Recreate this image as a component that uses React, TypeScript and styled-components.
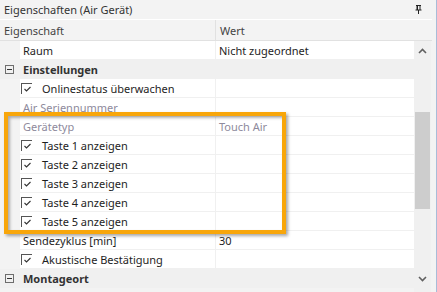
import React from "react";
import styled, { createGlobalStyle } from "styled-components";

const GlobalStyle = createGlobalStyle`
  html, body { margin: 0; padding: 0; background: #ffffff; }
  * { box-sizing: border-box; }
`;

const FONT = `"Noto Sans", "Open Sans", sans-serif`;

const Panel = styled.div`
  position: relative;
  width: 437px;
  height: 292px;
  background: #f3f3f3;
  font-family: ${FONT};
  font-size: 11px;
  color: #1e1e1e;
  overflow: hidden;
  display: flex;
  flex-direction: column;
  padding-right: 4px;
  border-right: 1px solid #a8bcd8;
`;

const TitleBar = styled.div`
  height: 19px;
  flex: none;
  display: flex;
  align-items: center;
  justify-content: space-between;
  padding: 0 10px 0 4px;
  color: #333;
`;

const Header = styled.div`
  height: 22px;
  flex: none;
  display: grid;
  grid-template-columns: 216px 1fr;
  border-top: 1px solid #ffffff;
  border-bottom: 1px solid #e1e1e1;
  color: #444;
`;

const HeaderCell = styled.div<{ $last?: boolean }>`
  display: flex;
  align-items: center;
  padding-left: 4px;
  border-right: ${(p) => (p.$last ? "none" : "1px solid #e1e1e1")};
`;

const Body = styled.div`
  flex: 1;
  display: flex;
  min-height: 0;
`;

const Grid = styled.div`
  width: 414px;
  display: flex;
  flex-direction: column;
`;

const Row = styled.div<{ $category?: boolean }>`
  height: 19px;
  flex: none;
  display: grid;
  grid-template-columns: 20px 196px 1fr;
  background: ${(p) => (p.$category ? "#f0f0f0" : "#ffffff")};
`;

const Gutter = styled.div`
  background: #f3f3f3;
`;

const NameCell = styled.div<{ $muted?: boolean }>`
  display: flex;
  align-items: center;
  gap: 10px;
  padding-left: 3px;
  border-right: 1px solid #f0f0f0;
  border-bottom: 1px solid #f0f0f0;
  color: ${(p) => (p.$muted ? "#8e8a9c" : "#1e1e1e")};
  white-space: nowrap;
`;

const CheckName = styled(NameCell)`
  padding-left: 1px;
`;

const ValueCell = styled.div<{ $muted?: boolean }>`
  display: flex;
  align-items: center;
  padding-left: 3px;
  border-bottom: 1px solid #f0f0f0;
  color: ${(p) => (p.$muted ? "#8e8a9c" : "#1e1e1e")};
  white-space: nowrap;
`;

const CategoryCell = styled.div`
  grid-column: 1 / -1;
  display: flex;
  align-items: center;
  font-weight: 700;
  color: #333;
  padding-left: 5px;
  gap: 9px;
`;

const MinusBox = styled.span`
  width: 9px;
  height: 9px;
  border: 1px solid #6d6d6d;
  position: relative;
  flex: none;
  &::after {
    content: "";
    position: absolute;
    left: 1px;
    right: 1px;
    top: 3px;
    height: 1px;
    background: #333;
  }
`;

const Check = styled.span`
  width: 11px;
  height: 11px;
  flex: none;
  border-top: 1px solid #555;
  border-left: 1px solid #555;
  display: flex;
  align-items: center;
  justify-content: center;
`;

const ScrollBar = styled.div`
  width: 17px;
  flex: none;
  background: #f0f0f0;
  display: flex;
  flex-direction: column;
  align-items: center;
  padding-bottom: 4px;
`;

const ArrowBtn = styled.div`
  height: 19px;
  width: 17px;
  flex: none;
  display: flex;
  align-items: center;
  justify-content: center;
`;

const Track = styled.div`
  flex: 1;
  width: 17px;
  padding: 52px 1px 0 1px;
`;

const Thumb = styled.div`
  width: 15px;
  height: 97px;
  background: #cdcdcd;
`;

const Highlight = styled.div`
  position: absolute;
  left: 4px;
  top: 112px;
  width: 282px;
  height: 122px;
  border: 4px solid #f8a60a;
  box-shadow: 2px 2px 3px rgba(0, 0, 0, 0.35), inset 2px 2px 3px rgba(0, 0, 0, 0.3);
  pointer-events: none;
`;

const CheckMark = () => (
  <svg width="9" height="8" viewBox="0 0 9 8">
    <path d="M1.5 4 L3.5 6 L7.5 2" fill="none" stroke="#333" strokeWidth="1.1" />
  </svg>
);

const Pin = () => (
  <svg width="7" height="9" viewBox="0 0 7 9">
    <path d="M1 0.5 H6 M2 0.5 V5 M5 0.5 V5 M0.5 5 H6.5 M3.5 5 V9" fill="none" stroke="#222" strokeWidth="1" />
    <rect x="2" y="1" width="1" height="4" fill="#222" />
  </svg>
);

const Chevron = ({ up }: { up?: boolean }) => (
  <svg width="9" height="6" viewBox="0 0 9 6">
    <path d={up ? "M1 5 L4.5 1.5 L8 5" : "M1 1 L4.5 4.5 L8 1"} fill="none" stroke="#606060" strokeWidth="1.6" />
  </svg>
);

type Item =
  | { kind: "cat"; name: string }
  | { kind: "prop"; name: string; value?: string; muted?: boolean }
  | { kind: "check"; name: string };

const items: Item[] = [
  { kind: "prop", name: "Raum", value: "Nicht zugeordnet" },
  { kind: "cat", name: "Einstellungen" },
  { kind: "check", name: "Onlinestatus überwachen" },
  { kind: "prop", name: "Air Seriennummer", muted: true },
  { kind: "prop", name: "Gerätetyp", value: "Touch Air", muted: true },
  { kind: "check", name: "Taste 1 anzeigen" },
  { kind: "check", name: "Taste 2 anzeigen" },
  { kind: "check", name: "Taste 3 anzeigen" },
  { kind: "check", name: "Taste 4 anzeigen" },
  { kind: "check", name: "Taste 5 anzeigen" },
  { kind: "prop", name: "Sendezyklus [min]", value: "30" },
  { kind: "check", name: "Akustische Bestätigung" },
  { kind: "cat", name: "Montageort" },
];

export default function App() {
  return (
    <>
      <GlobalStyle />
      <Panel>
        <TitleBar>
          <span>Eigenschaften (Air Gerät)</span>
          <Pin />
        </TitleBar>
        <Header>
          <HeaderCell>Eigenschaft</HeaderCell>
          <HeaderCell $last>Wert</HeaderCell>
        </Header>
        <Body>
          <Grid>
            {items.map((it, i) => {
              if (it.kind === "cat") {
                return (
                  <Row key={i} $category>
                    <CategoryCell>
                      <MinusBox />
                      {it.name}
                    </CategoryCell>
                  </Row>
                );
              }
              if (it.kind === "check") {
                return (
                  <Row key={i}>
                    <Gutter />
                    <CheckName>
                      <Check>
                        <CheckMark />
                      </Check>
                      {it.name}
                    </CheckName>
                    <ValueCell />
                  </Row>
                );
              }
              return (
                <Row key={i}>
                  <Gutter />
                  <NameCell $muted={it.muted}>{it.name}</NameCell>
                  <ValueCell $muted={it.muted}>{it.value}</ValueCell>
                </Row>
              );
            })}
          </Grid>
          <ScrollBar>
            <ArrowBtn>
              <Chevron up />
            </ArrowBtn>
            <Track>
              <Thumb />
            </Track>
            <ArrowBtn>
              <Chevron />
            </ArrowBtn>
          </ScrollBar>
        </Body>
        <Highlight />
      </Panel>
    </>
  );
}
